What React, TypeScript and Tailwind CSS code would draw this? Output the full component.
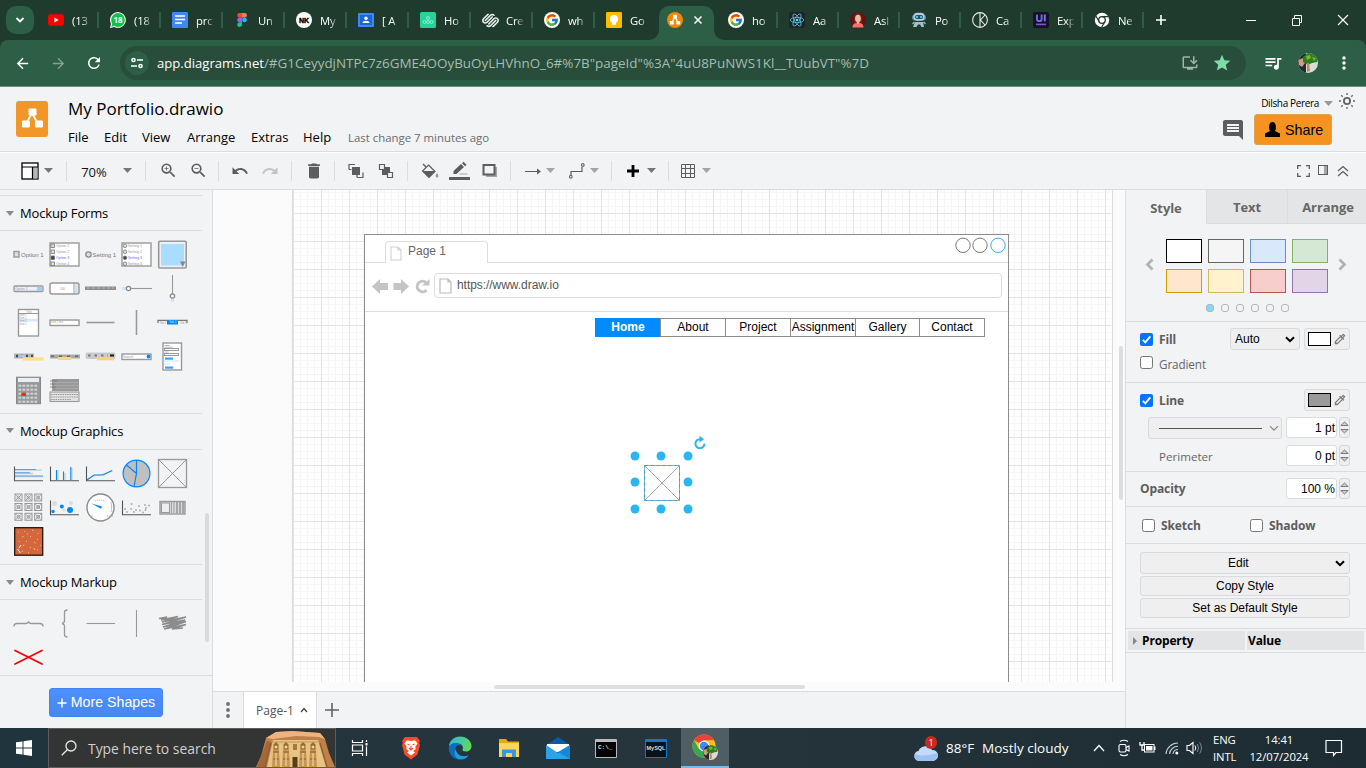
import React from "react";
import {
  MdArrowBack, MdArrowForward, MdRefresh, MdStar, MdQueueMusic, MdMoreVert, MdZoomIn, MdZoomOut,
  MdUndo, MdRedo, MdDelete, MdComment, MdOutlineColorize, MdInstallDesktop,
} from "react-icons/md";
import { FcGoogle } from "react-icons/fc";
import { SiSquarespace } from "react-icons/si";

type Kids = { children?: React.ReactNode };

const S = ({ w = 16, h = 16, vb, children, className = "" }: Kids & { w?: number; h?: number; vb?: string; className?: string }) => (
  <svg width={w} height={h} viewBox={vb ?? `0 0 ${w} ${h}`} fill="none" className={`block shrink-0 ${className}`}>
    {children}
  </svg>
);

/* ---------- browser chrome ---------- */

const YouTube = () => (<S><rect x="0" y="2.3" width="16" height="11.4" rx="2.6" fill="#f00" /><path d="M6.4 5.6v4.8L10.6 8z" fill="#fff" /></S>);
const WhatsApp = () => (
  <S><path d="M0 16l1-4.2A7.9 7.9 0 1 1 4.300 15z" fill="#fff" /><circle cx="8" cy="8" r="6.900" fill="#12c24d" /><path d="M1.300 14.700l1-3.500 3 2.600z" fill="#12c24d" />
    <text x="8" y="11" fontSize="8" fontWeight="700" fill="#fff" textAnchor="middle" fontFamily="Open Sans">18</text></S>
);
const Docs = () => (<S><rect width="16" height="16" rx="1" fill="#4285f4" /><path d="M3 4h10M3 7.500h10M3 11h7" stroke="#fff" strokeWidth="1.700" /></S>);
const Figma = () => (
  <S><path d="M5.500 1H8v4.600H5.500a2.300 2.300 0 0 1 0-4.600z" fill="#f24e1e" /><path d="M8 1h2.700a2.300 2.300 0 0 1 0 4.600H8z" fill="#ff7262" />
    <path d="M5.500 5.600H8v4.600H5.500a2.300 2.300 0 0 1 0-4.600z" fill="#a259ff" /><circle cx="10.500" cy="7.900" r="2.300" fill="#1abcfe" /><path d="M5.500 10.200H8v2.400a2.400 2.400 0 1 1-2.500-2.400z" fill="#0acf83" /></S>
);
const NK = () => (<S><circle cx="8" cy="8" r="8" fill="#fff" /><text x="8" y="10.600" fontSize="7" fontWeight="700" stroke="#000" strokeWidth=".4" fill="#000" textAnchor="middle" fontFamily="Liberation Sans">NK</text></S>);
const Classroom = () => (<S><rect y="1" width="16" height="14" rx="1" fill="#4285f4" /><rect x="2" y="3" width="12" height="10" fill="#1967d2" /><circle cx="8" cy="6.300" r="1.700" fill="#fff" /><path d="M4.500 11c0-3 7-3 7 0z" fill="#fff" /></S>);
const Green = () => (<S><rect width="16" height="16" rx="1.500" fill="#25d39a" /><g stroke="#a5efd5" strokeWidth=".8"><circle cx="8" cy="6" r="1.500" /><circle cx="4.500" cy="10" r="1.500" /><circle cx="8" cy="10" r="1.500" /><circle cx="11.500" cy="10" r="1.500" /></g></S>);
const Squares = () => <SiSquarespace size={17} className="-mx-[0.5px] shrink-0 text-[#e8eeea]" />;
const Keep = () => (<S><rect width="16" height="16" rx="1.300" fill="#fbbc04" /><circle cx="8" cy="7" r="4" fill="#fff" /><path d="M6 10h4v2.800H6z" fill="#fff" /></S>);
const DrawTab = () => (<S><circle cx="8" cy="8" r="8" fill="#f08705" /><path d="M8 5L4.800 10.500M8 5l3.200 5.500" stroke="#fff" strokeWidth="1.300" /><g fill="#fff"><rect x="6" y="2.800" width="4" height="3.700" rx=".6" /><rect x="2.800" y="8.900" width="4" height="3.700" rx=".6" /><rect x="9.200" y="8.900" width="4" height="3.700" rx=".6" /></g></S>);
const ReactTab = () => (<S><rect width="16" height="16" rx="1.500" fill="#20232a" /><g stroke="#61dafb" strokeWidth=".7"><ellipse cx="8" cy="8" rx="6.800" ry="2.600" /><ellipse cx="8" cy="8" rx="6.800" ry="2.600" transform="rotate(60 8 8)" /><ellipse cx="8" cy="8" rx="6.800" ry="2.600" transform="rotate(120 8 8)" /></g><circle cx="8" cy="8" r="1.300" fill="#61dafb" /></S>);
const Woman = () => (
  <S><circle cx="8" cy="8" r="7.800" fill="#6d0d10" /><path d="M4.500 12C3 7 4 1 8 1S13 7 11.500 12z" fill="#5a3024" /><ellipse cx="8" cy="6.500" rx="2.900" ry="3.800" fill="#f2b79c" /><path d="M2.500 15.500c0-4 3-4.500 5.500-4.500s5.500.5 5.500 4.500z" fill="#ff6f6f" /><path d="M6.800 9h2.400v2.200L8 12l-1.200-.8z" fill="#f2b79c" /></S>
);
const Robot = () => (
  <S><rect x="1" y="2.500" width="14" height="6" rx="3" fill="#5b8fa8" /><rect x="2.500" y=".8" width="11" height="8" rx="3.500" fill="#b6ccd8" /><rect x="4" y="3" width="8" height="4" rx="2" fill="#24506e" /><circle cx="6" cy="5" r="1" fill="#5fe3ff" /><circle cx="10" cy="5" r="1" fill="#5fe3ff" /><path d="M4 10h8l1 5h-2.500L9 12.500H7L5.500 15H2z" fill="#a9bccd" /><path d="M1.500 12l2-2M14.500 12l-2-2" stroke="#8bb" strokeWidth="1.500" /></S>
);
const CK = () => (<S><circle cx="8" cy="8" r="7.400" stroke="#e6ece8" strokeWidth="1.100" /><path d="M8 .7v14.600M13 3L8.500 8l4.500 5" stroke="#e6ece8" strokeWidth="1.100" /></S>);
const UI = () => (
  <S><rect width="16" height="16" rx="2" fill="#17121f" /><path d="M4 2.500v4.700c0 2.600 4.600 2.600 4.600 0V2.500" stroke="#6a6cf5" strokeWidth="1.900" /><path d="M11.800 2.500v6.800" stroke="#8b6df5" strokeWidth="1.900" /><path d="M3 12.400h10" stroke="#8a4fd6" strokeWidth="1.600" /></S>
);
const ChromeGray = () => (<S><circle cx="8" cy="8" r="7.200" fill="#fff" /><circle cx="8" cy="8" r="3.300" fill="#fff" stroke="#1f3b2d" strokeWidth="1.300" /><path d="M8 4.700h6.600M5.200 9.700L1.900 4M10.800 9.700L7.600 15.300" stroke="#1f3b2d" strokeWidth="1.200" /></S>);
const G = () => <FcGoogle size={16} className="shrink-0 rounded-full bg-white p-px" />;

const leftTabs: [React.ReactNode, string][] = [
  [<YouTube />, "(13"], [<WhatsApp />, "(18"], [<Docs />, "prc"], [<Figma />, "Un"], [<NK />, "My"], [<Classroom />, "[ A"],
  [<Green />, "Ho"], [<Squares />, "Cre"], [<G />, "wh"], [<Keep />, "Go"],
];
const rightTabs: [React.ReactNode, string][] = [
  [<G />, "ho"], [<ReactTab />, "Aa"], [<Woman />, "Asl"], [<Robot />, "Po"], [<CK />, "Ca"], [<UI />, "Exp"], [<ChromeGray />, "Ne"],
];

const Tab = ({ icon, label, wide, sep = true }: { icon: React.ReactNode; label: string; wide?: boolean; sep?: boolean }) => (
  <div className={`flex h-10 shrink-0 items-center ${wide ? "w-[62px]" : "w-[61px]"}`}>
    <div className="ml-[10px] flex w-4 shrink-0 justify-center">{icon}</div>
    <div className={`ml-2 mt-[2px] h-[18px] shrink-0 whitespace-nowrap text-[11.3px] leading-[17px] tracking-[-0.2px] text-white [mask-image:linear-gradient(to_right,#000_55%,transparent_105%)] ${wide ? "w-[18px]" : "w-[17px]"}`}>{label}</div>
    {sep && <div className="ml-auto mr-px h-4 w-[2px] bg-[#2c5f46]" />}
  </div>
);

const Avatar = ({ size }: { size: number }) => (
  <S w={size} h={size} vb="0 0 20 20">
    <defs><clipPath id={`av${size}`}><circle cx="10" cy="10" r="10" /></clipPath></defs>
    <g clipPath={`url(#av${size})`}>
      <rect width="20" height="20" fill="#d9ddd2" /><path d="M0 0h8v20H0z" fill="#1d2a38" /><path d="M0 7l5-2 2 5-3 4-3-2z" fill="#d09a7b" />
      <path d="M5 4l6-5 9 3-1 7-5 1-4 2-5-3z" fill="#2f7d1d" /><path d="M8 3l4-1 1 3-4 2zM14 4l4 1-2 3z" fill="#74b53b" /><path d="M9 10l2 0 1 8-3 1z" fill="#b98a62" />
    </g>
  </S>
);

function Browser() {
  return (
    <>
      <div className="flex h-10 shrink-0 items-center bg-[#1f3b2d]">
        <div className="ml-[6px] mr-1 flex h-7 w-7 shrink-0 items-center justify-center rounded-[10px] bg-[#2c5f46]">
          <S w={10} h={8}><path d="M1.500 2l3.500 3.500L8.500 2" stroke="#fff" strokeWidth="1.800" /></S>
        </div>
        {leftTabs.map(([i, l], k) => <Tab key={k} icon={i} label={l} wide sep={k < 9} />)}
        <div className="relative ml-px mr-1 flex h-[34px] w-[55px] shrink-0 items-center self-end rounded-t-[10px] bg-[#2c5f46]">
          <S w={10} h={10} className="absolute -left-[10px] bottom-0"><path d="M10 0v10H0A10 10 0 0 0 10 0z" fill="#2c5f46" /></S>
          <S w={10} h={10} className="absolute -right-[10px] bottom-0"><path d="M0 0v10h10A10 10 0 0 1 0 0z" fill="#2c5f46" /></S>
          <div className="-mt-[6px] ml-2"><DrawTab /></div>
          <S w={10} h={10} className="-mt-[6px] ml-[10px]"><path d="M1.500 1.500l7 7M8.500 1.500l-7 7" stroke="#eef3f0" strokeWidth="1.700" /></S>
        </div>
        {rightTabs.map(([i, l], k) => <Tab key={k} icon={i} label={l} />)}
        <S w={12} h={12} className="ml-[10px]"><path d="M6 1v10M1 6h10" stroke="#fff" strokeWidth="1.600" /></S>
        <S w={12} h={12} className="ml-[78px]"><path d="M1 6.500h10" stroke="#fff" /></S>
        <S w={12} h={12} className="ml-[34px]"><path d="M1.500 4.500h7v7h-7zM3.500 4.500v-3h7v7h-2" stroke="#fff" /></S>
        <S w={12} h={12} className="ml-[34px]"><path d="M1 1l10 10M11 1L1 11" stroke="#fff" strokeWidth="1.100" /></S>
      </div>
      <div className="h-[47px] shrink-0 bg-[#1f3b2d]">
        <div className="flex h-[47px] items-center rounded-t-[8px] border-b border-[#6b9480] bg-[#2c5f46]">
          <MdArrowBack size={17} className="ml-[14px] text-white" />
          <MdArrowForward size={17} className="ml-[19px] text-[#83a291]" />
          <MdRefresh size={18} className="ml-[18px] text-white" />
          <div className="ml-[17px] flex h-[34px] w-[1126px] items-center rounded-full bg-[#294d3b]">
            <div className="ml-[5px] flex h-6 w-6 items-center justify-center rounded-full bg-[#2c5f46]">
              <S w={12} h={12}><g stroke="#fff" strokeWidth="1.500"><circle cx="2.500" cy="3" r="1.600" /><path d="M6 3h6M0 9h6" /><circle cx="9.500" cy="9" r="1.600" /></g></S>
            </div>
            <div className="ml-2 w-[1024px] shrink-0 whitespace-nowrap text-[13.1px] leading-[18px] text-[#a5bdb0]">
              <span className="text-white">app.diagrams.net</span>
              <span className="text-[13.430px]">/#G1CeyydjNTPc7z6GME4OOyBuOyLHVhnO_6#%7B"pageId"%3A"4uU8PuNWS1Kl__TUubVT"%7D</span>
            </div>
            <MdInstallDesktop size={18} className="shrink-0 text-[#a3b3aa]" />
            <MdStar size={20} className="ml-[13px] shrink-0 text-[#81dba8]" />
          </div>
          <MdQueueMusic size={20} className="ml-[17px] shrink-0 text-white" />
          <div className="ml-[15px]"><Avatar size={20} /></div>
          <MdMoreVert size={20} className="ml-[16px] shrink-0 text-white" />
        </div>
      </div>
    </>
  );
}

/* ---------- app header ---------- */

const Caret = ({ c = "#777", className = "" }: { c?: string; className?: string }) => (
  <S w={9} h={5} className={className}><path d="M0 0h9L4.500 5z" fill={c} /></S>
);

function Header() {
  return (
    <div className="flex h-[65px] shrink-0 border-b border-[#dadce0] bg-[#f1f3f4]">
      <div className="ml-4 mt-[14px] h-9 w-8 rounded-[3px] bg-[#f2962a]">
        <S w={32} h={36}><path d="M16 12L10 23M16 12l6 11" stroke="#fff" strokeWidth="1.800" /><g fill="#fff"><rect x="12.500" y="7.500" width="8" height="7" rx="1.200" /><rect x="6" y="19.500" width="8" height="7" rx="1.200" /><rect x="19" y="19.500" width="8" height="7" rx="1.200" /></g></S>
      </div>
      <div className="ml-5 flex w-[500px] flex-col">
        <div className="mt-[10px] h-6 whitespace-nowrap text-[17px] leading-6 text-black">My Portfolio.drawio</div>
        <div className="mt-[6px] flex h-5 whitespace-nowrap text-[13px] leading-5 text-black">
          <span className="w-9">File</span><span className="w-[38px]">Edit</span><span className="w-[45px]">View</span>
          <span className="w-16">Arrange</span><span className="w-[52px]">Extras</span><span className="w-[45px]">Help</span>
          <span className="text-[11.4px] leading-[21px] text-[#6b6b6b]">Last change 7 minutes ago</span>
        </div>
      </div>
      <div className="ml-auto flex flex-col items-end">
        <div className="mr-[10px] mt-[6px] flex h-[18px] items-center">
          <span className="mt-px text-[10px] leading-[14px] tracking-[-0.35px] text-black">Dilsha Perera</span>
          <Caret c="#999" className="ml-[5px] mt-[2px]" />
          <S w={18} h={18} className="ml-[5px] -mt-[2px]"><g stroke="#5f6368" strokeWidth="1.300"><circle cx="9" cy="9" r="3.100" strokeWidth="1.800" /><path d="M9 1v2M9 15v2M1 9h2M15 9h2M3.300 3.300l1.400 1.400M13.300 13.300l1.400 1.400M3.300 14.700l1.400-1.400M13.300 4.700l1.400-1.400" /></g></S>
        </div>
        <div className="mr-[34px] mt-[3px] flex h-[31px] items-center">
          <MdComment size={24} className="mr-[9px] text-[#5c5d60]" />
          <div className="flex h-[31px] w-[78px] items-center rounded-[3px] border border-[#e0a050] bg-[#f4931f] pl-[10px]">
            <S w={15} h={16}><path d="M0 15v-3.500l5-2.500c-1.500-2-1.500-9 2.500-9s4 7 2.500 9l5 2.500V15z" fill="#000" /></S>
            <span className="ml-[5px] font-['Liberation_Sans',sans-serif] text-[14.300px] leading-5 text-black">Share</span>
          </div>
        </div>
      </div>
    </div>
  );
}

const Cell = ({ w, ml, children }: Kids & { w: string; ml: string }) => (
  <div className={`flex h-6 shrink-0 items-center justify-center text-[#5c5d60] ${w} ${ml}`}>{children}</div>
);
const Sep = ({ ml }: { ml: string }) => <div className={`h-5 w-px shrink-0 bg-[#dadce0] ${ml}`} />;

function Toolbar() {
  return (
    <div className="flex h-[38px] shrink-0 items-center border-b border-t border-[#dadce0] border-t-white bg-[#f1f3f4] pb-px">
      <Cell w="w-[26px]" ml="ml-[17px]"><S w={18} h={18}><rect x="1" y="1" width="16" height="16" fill="#fff" stroke="#000" strokeWidth="1.300" /><rect x="11.500" y="5" width="5" height="11.500" fill="#b5b5b5" /><path d="M1 5h16M11.500 5v12" stroke="#000" strokeWidth="1.200" /></S></Cell>
      <Cell w="w-[10px]" ml=""><Caret /></Cell>
      <Sep ml="ml-[13px]" />
      <Cell w="w-[38px]" ml="ml-[8px]"><span className="mt-[3px] text-[13px] leading-5 text-[#111]">70%</span></Cell>
      <Cell w="w-3" ml="ml-2"><Caret /></Cell>
      <Sep ml="ml-[12px]" />
      <Cell w="w-[26px]" ml="ml-[9px]"><MdZoomIn size={19} /></Cell>
      <Cell w="w-[26px]" ml="ml-1"><MdZoomOut size={19} /></Cell>
      <Sep ml="ml-[7px]" />
      <Cell w="w-[26px]" ml="ml-2"><MdUndo size={18} /></Cell>
      <Cell w="w-[26px]" ml="ml-1"><MdRedo size={18} className="text-[#c0c2c4]" /></Cell>
      <Sep ml="ml-2" />
      <Cell w="w-[26px]" ml="ml-[9px]"><MdDelete size={20} /></Cell>
      <Sep ml="ml-[7px]" />
      <Cell w="w-[26px]" ml="ml-2"><S><path d="M1 6.500V1.500h6M15 9.500v5H9" stroke="#5c5d60" strokeWidth="1.200" /><path d="M1 6.500h2.500M9 14.500v-3" stroke="#5c5d60" strokeWidth="1.200" /><rect x="4" y="4" width="8" height="8" fill="#5c5d60" /></S></Cell>
      <Cell w="w-[26px]" ml="ml-1"><S><rect x="4" y="4" width="8" height="8" fill="#5c5d60" /><path d="M1.500 1.500h5v5h-5zM9.500 9.500h5v5h-5z" fill="#f1f3f4" stroke="#5c5d60" strokeWidth="1.200" /></S></Cell>
      <Sep ml="ml-2" />
      <Cell w="w-[26px]" ml="ml-[9px]">
        <S w={18} h={16}><path d="M2 1l3 3" stroke="#5c5d60" strokeWidth="1.400" /><path d="M7.500 2L14 8.500 8 14.500 1.500 8z" stroke="#5c5d60" strokeWidth="1.200" /><path d="M1.500 8h12.500L8 14.500z" fill="#5c5d60" /><path d="M16 10c2.500 3 1.200 4.500 0 4.500S13.500 13 16 10z" fill="#9a9b9d" /></S>
      </Cell>
      <Cell w="w-6" ml="ml-1"><S w={21} h={20}><path d="M4.500 13V10L12 3l3 3-7.500 7zM13 2.200l1.500-1.400 3 3-1.500 1.400z" fill="#5c5d60" /><path d="M10.500 13h8" stroke="#b5b5b5" strokeWidth="1.200" /><rect y="16" width="21" height="3" fill="#5c5d60" /></S></Cell>
      <Cell w="w-[26px]" ml="ml-[6px]"><S w={16} h={15}><path d="M4 4h11v10H4z" fill="#a5a6a8" /><rect x="1.500" y="2" width="11" height="9.500" fill="#f1f3f4" stroke="#5c5d60" strokeWidth="2" /></S></Cell>
      <Sep ml="ml-[7px]" />
      <Cell w="w-[26px]" ml="ml-[9px]"><S w={16} h={8}><path d="M0 4.500h13" stroke="#5c5d60" /><path d="M12 1.500l4 3-4 3z" fill="#5c5d60" /></S></Cell>
      <Cell w="w-3" ml="-ml-[2px]"><Caret c="#a3a4a6" /></Cell>
      <Cell w="w-[26px]" ml="ml-2"><S><path d="M2 12V8.500h11V4" stroke="#5c5d60" strokeWidth="1.200" /><path d="M.6 12.600h2.400v2.400H.6zM12.600.8H15v2.400h-2.400z" fill="#f1f3f4" stroke="#5c5d60" /></S></Cell>
      <Cell w="w-3" ml="-ml-[2px]"><Caret c="#a3a4a6" /></Cell>
      <Sep ml="ml-[11px]" />
      <Cell w="w-[26px]" ml="ml-2"><S w={14} h={14}><path d="M7 1v12M1 7h12" stroke="#000" strokeWidth="2.800" /></S></Cell>
      <Cell w="w-3" ml="-ml-[1px]"><Caret /></Cell>
      <Sep ml="ml-[11px]" />
      <Cell w="w-[26px]" ml="ml-[6px]"><S w={14} h={14}><path d="M.5.500h13v13H.5zM4.500.500v13M9.500.500v13M.5 4.500h13M.5 9.500h13" stroke="#5c5d60" /></S></Cell>
      <Cell w="w-3" ml="-ml-px"><Caret c="#a3a4a6" /></Cell>
      <div className="ml-auto mr-[17px] flex items-center gap-2">
        <S w={13} h={12}><path d="M.7 4V.7H4M9 .7h3.300V4M.7 8v3.300H4M9 11.300h3.300V8" stroke="#5c5d60" strokeWidth="1.300" /></S>
        <S w={11} h={11}><rect x=".5" y=".5" width="9" height="9" stroke="#5c5d60" /><rect x="6" y="1" width="3" height="8" fill="#a3a4a6" /></S>
        <S w={12} h={12}><path d="M1 6l5-4.500L11 6M1 11l5-4.500 5 4.500" stroke="#5c5d60" strokeWidth="1.300" /></S>
      </div>
    </div>
  );
}

/* ---------- shape palette ---------- */

const L = "#999";
const Box = ({ x, y, w, h, f = "#fff", s = L, sw = 1.400 }: { x: number; y: number; w: number; h: number; f?: string; s?: string; sw?: number }) => (
  <rect x={x} y={y} width={w} height={h} fill={f} stroke={s} strokeWidth={sw} />
);
const Tiny = ({ x, y, c = "#999", size = 3, children }: Kids & { x: number; y: number; c?: string; size?: number }) => (
  <text x={x} y={y} fontSize={size} fill={c} fontFamily="Liberation Sans">{children}</text>
);
const rows4 = [7, 13, 19, 25];

const forms: React.ReactNode[] = [
  <><Box x={4} y={14.500} w={5} h={5.500} f="#ddd" /><Tiny x={11} y={19.500} size={6} c="#777">Option 1</Tiny></>,
  <><Box x={4} y={6} w={29} h={23} />{rows4.map((y, i) => <g key={y}><Box x={5} y={y} w={3.500} h={3.500} f={i === 2 ? "#444" : "#ddd"} s="#777" sw={.8} /><Tiny x={10} y={y + 3} size={3.500} c={i === 2 ? "#66f" : "#999"}>Option {i + 1}</Tiny></g>)}</>,
  <><circle cx="6.500" cy="17.500" r="2.700" fill="#ddd" stroke="#888" strokeWidth="1.200" /><Tiny x={10.500} y={19.500} size={6} c="#777">Setting 1</Tiny></>,
  <><Box x={4} y={6} w={29} h={23} />{rows4.map((y, i) => <g key={y}><circle cx="7" cy={y + 1.800} r="1.800" fill={i === 2 ? "#444" : "#ddd"} stroke="#777" strokeWidth=".8" /><Tiny x={10} y={y + 3} size={3.500} c={i === 2 ? "#66f" : "#999"}>Setting {i + 1}</Tiny></g>)}</>,
  <><rect x="4.700" y="4.200" width="27.500" height="26.800" rx="1" fill="#eef0f2" stroke={L} strokeWidth="1.600" /><rect x="7" y="7" width="23" height="21.500" fill="#a9ddff" /><path d="M26 24.500h5.500L28.700 30z" fill="#888" /></>,
  <><rect x="4" y="15" width="29" height="5.500" rx="1" fill="#eef" stroke={L} strokeWidth="1.300" /><rect x="27" y="15.700" width="5" height="4.200" fill="#9cd0f5" /><Tiny x={5} y={18.800} size={3.300}>Option 1</Tiny></>,
  <><rect x="4" y="12" width="29" height="11" rx="2" fill="#fff" stroke={L} strokeWidth="1.500" /><path d="M28 12v11" stroke={L} /><rect x="29" y="13" width="3" height="9" fill="#cbe6fa" /><Tiny x={14} y={18.500}>100</Tiny></>,
  <><rect x="3" y="15.500" width="31" height="3.500" fill="#8c8c8c" /><path d="M5 17h27" stroke="#ccc" strokeWidth=".8" strokeDasharray="3 2" /></>,
  <><path d="M4 17.500h30" stroke={L} strokeWidth="1.100" /><rect x="4" y="16" width="5" height="3" fill="#cfe4f5" /><circle cx="10.500" cy="17.500" r="2.200" fill="#f1f3f4" stroke="#888" strokeWidth="1.200" /></>,
  <><path d="M18.500 4v26" stroke={L} strokeWidth="1.100" /><rect x="17" y="27" width="3" height="4" fill="#cfe4f5" /><circle cx="18.500" cy="25" r="2.200" fill="#f1f3f4" stroke="#888" strokeWidth="1.200" /></>,
  <><Box x={8.500} y={4.500} w={20} h={26.500} /><path d="M9 8.500h19" stroke={L} /><rect x="9" y="14" width="19" height="2.500" fill="#d5e8fb" /><Tiny x={16} y={7.500}>Title</Tiny>{[11, 14, 17, 20].map((y) => <Tiny key={y} x={9.500} y={y} size={2.600}>Item 1</Tiny>)}</>,
  <><Box x={4} y={15} w={29} h={5.500} /><Tiny x={5} y={18} size={2.600}>Line 1 text</Tiny></>,
  <path d="M4.500 17.500h28" stroke={L} strokeWidth="1.600" />,
  <path d="M18.500 5v25" stroke={L} strokeWidth="1.600" />,
  <><path d="M4 18v-2.700h29V18" stroke="#777" strokeWidth="1.300" /><rect x="13" y="15" width="11" height="4.500" fill="#08f" /><Tiny x={15} y={18.300} c="#cfe6ff">Tab 2</Tiny><Tiny x={5.500} y={18.500} size={2.600}>Tab 1</Tiny><Tiny x={26} y={18.500} size={2.600}>Tab 3</Tiny></>,
  <><rect x="4" y="14.500" width="20" height="5" fill="#b5b5b5" /><path d="M6 17h17" stroke="#445" strokeWidth="2.500" strokeDasharray="2 3" /><path d="M10 17h5" stroke="#acf" strokeWidth="2" /><rect x="12.500" y="18.300" width="21" height="3.400" fill="#ffe08a" /></>,
  <><rect x="4" y="15.500" width="30" height="4" fill="#aaa" /><path d="M5 17.300h27" stroke="#667" strokeWidth="1.600" strokeDasharray="3 5" /><rect x="12" y="18" width="13" height="3" fill="#ffd48a" /></>,
  <><rect x="4" y="14" width="29" height="5.500" rx="1" fill="#ccc" stroke="#bbb" strokeWidth=".6" /><path d="M6 16.500h20" stroke="#778" strokeWidth="2" strokeDasharray="2.500 4" /><path d="M28 16.500h4" stroke="#222" strokeWidth="2.200" /><rect x="15" y="18.300" width="17" height="3" fill="#ffd07a" /></>,
  <><Box x={4} y={15} w={29} h={5.500} /><circle cx="30.500" cy="17.500" r="1.900" fill="#08f" /><Tiny x={5} y={18.800} size={3.300}>Search</Tiny></>,
  <><Box x={9} y={4} w={18.500} h={27} /><path d="M10.500 6.500h5M10.500 8.200h8M10.500 13h4" stroke="#9ab" strokeWidth=".8" /><Box x={10.500} y={9.500} w={14} h={2} sw={1} /><Box x={10.500} y={14.500} w={14} h={2} sw={1} /><rect x="11" y="18.500" width="8" height="2.200" fill="#3aa0ff" /><rect x="11" y="27.500" width="8" height="2.200" fill="#3aa0ff" /><path d="M10 22h15M10 25h6" stroke="#bdf" strokeWidth=".8" /></>,
  <><rect x="6.500" y="4.200" width="24" height="26.500" fill="#999" stroke="#888" /><rect x="8" y="5" width="21" height="4" fill="#e8eef5" />{[12, 16, 20, 24, 28].map((y) => [8, 12, 16, 20, 24].map((x) => <rect key={`${x}-${y}`} x={x + .4} y={y - .3} width="2.800" height="2" fill={x === 12 && y === 20 ? "#f22" : "#d0d4d8"} />))}<rect x="11.500" y="20" width="4.500" height="3" fill="#f22" /></>,
  <><path d="M6 6h27v12H6z" fill="#999" /><path d="M4 8h7M4 11h5M4 14h6" stroke="#777" strokeWidth=".8" /><path d="M7 9.500h25M8 12.500h25M10 15.500h22" stroke="#b5b5b5" strokeWidth=".6" /><Box x={4} y={19} w={29} h={9.500} f="#e2e2e2" sw={1.100} /><path d="M5 21.500h27M5 24h27M5 26.500h20" stroke="#999" strokeWidth="1" strokeDasharray="1.500 .8" /></>,
];

const Axis = () => <path d="M4.500 10.500v14.300H33" stroke="#555" strokeWidth="1.100" />;
const graphics: React.ReactNode[] = [
  <><path d="M5 14.200h27M5 17.500h18M5 20.500h28" stroke="#ccc" strokeWidth="1.300" /><path d="M5 13.500h21M5 16.700h15M5 20h28" stroke="#4ea6f5" strokeWidth="1" /><Axis /></>,
  <><path d="M12 14v10M19 17v7M26 12v12" stroke="#ccc" strokeWidth="1.200" /><path d="M10.500 14v10M17.500 15.500v8.500M24.800 11v13" stroke="#08f" strokeWidth="1.100" /><Axis /></>,
  <><path d="M5 23l7-3 9-2 10-3" stroke="#ccc" /><path d="M5 24l7-5h9l9-4.500" stroke="#08f" strokeWidth="1.100" /><Axis /></>,
  <><circle cx="18.500" cy="17.500" r="13.400" fill="#c0c0c0" stroke="#08f" strokeWidth="1.200" /><path d="M18.500 17.500V4M18.500 17.500L8.500 9M18.500 17.500l-2.500 13" stroke="#08f" strokeWidth="1.200" /></>,
  <><Box x={4.500} y={3.500} w={28} h={28} f="none" sw={1.300} /><path d="M4.500 3.500l28 28M32.500 3.500l-28 28" stroke={L} /></>,
  <>{[4.500, 14, 23.800].map((y) => [5, 15, 24.700].map((x) => <g key={`${x}-${y}`} stroke="#999"><rect x={x} y={y - .5} width="7" height="7" strokeWidth="1" /><path d={`M${x} ${y - .5}l7 7m0-7l-7 7`} strokeWidth=".8" /><circle cx={x + 3.500} cy={y + 3} r="1.500" /></g>))}</>,
  <><circle cx="8.500" cy="13.500" r="2.500" fill="#ddd" /><circle cx="25" cy="13" r="2" fill="#ddd" /><circle cx="15.800" cy="16.500" r="2" fill="#08f" /><circle cx="18" cy="20" r="1.600" fill="#ddd" /><circle cx="24" cy="20" r="3" fill="#08f" /><circle cx="7" cy="21.500" r="1.700" fill="#08f" /><Axis /></>,
  <><circle cx="18.500" cy="17.500" r="13.500" fill="#fff" stroke="#8c8c8c" strokeWidth="1.400" /><path d="M19 18.700L9.500 13.500l10.500 3z" fill="#08f" /><path d="M13 11c4-1.500 8-1 10 .5" stroke="#bbc" strokeWidth="1" strokeDasharray="1 1" /><path d="M29 12q1.500 5 0 10" stroke="#9cf" /><path d="M8 26h3M25 26h6" stroke="#b99" strokeDasharray="1 .7" /></>,
  <><g fill="#aaa">{[[7, 19], [9, 22], [13.500, 14], [13, 19], [18, 20], [21, 16], [22, 20.500], [28, 18], [27, 15], [31, 15.500], [27.500, 20], [16, 22], [25, 22.500]].map(([x, y]) => <circle key={`${x}${y}`} cx={x} cy={y} r=".9" />)}</g><Axis /></>,
  <><Box x={6} y={11.500} w={25} h={12.500} f="#ddd" s="#999" /><rect x="7.500" y="13" width="8" height="9.500" fill="#eee" stroke={L} /><path d="M17.500 12v11M20 12v11" stroke="#8ab" strokeWidth="1.100" /><path d="M23 12v11M26 12v11M29 12v11" stroke="#888" strokeWidth="1.300" /></>,
  <><rect x="4.700" y="3.700" width="28" height="27.500" fill="#d4683c" stroke="#22140c" strokeWidth="1.300" /><path d="M8 8l1 .5M14 7l.7.700M22 6l1.500.5M28 9l.5 1M12 13l1.500-.5M20 12l1 1M27 15l1 .5M9 17l.5 1M16 17l1 .5M24 18l1.500 1M30 22l.7-.7M13 22l1-1.500M20 23l1 1M27 26l1-.5M12 28l.5-1.500M18 29l1-.5M17 10h1M24 24l1 2" stroke="#f0cba4" strokeWidth=".8" /><path d="M7.500 25l3 4M9 24l2-3" stroke="#fff" strokeWidth=".9" /></>,
];

const markup: React.ReactNode[] = [
  <path d="M4 20.500c0-2.500 1-3 3-3h8.500c2 0 2.800-.5 3-2.300.2 1.800 1 2.300 3 2.300H30c2 0 3 .5 3 3" stroke={L} strokeWidth="1.300" />,
  <path d="M21.500 4c-2 0-3 .8-3 2.500v8c0 1.700-.5 2.700-2.500 3 2 .3 2.500 1.300 2.500 3v8c0 1.700 1 2.500 3 2.500" stroke={L} strokeWidth="1.300" />,
  <path d="M4.500 17.500h28.500" stroke={L} strokeWidth="1.100" />,
  <path d="M18.500 4v27" stroke={L} strokeWidth="1.100" />,
  <path d="M5 12.500l8-1.500-6 3 17-3.500-16 5.500 24-5-24 7.500 23-4.500-22 7 23-5.500-22 7.500 22-4.500-14 4.500 11-1" stroke="#8c8c8c" strokeWidth="1.500" />,
  <path d="M5 10.500l27 13.500M32 10.500L5 24" stroke="#f00" strokeWidth="1.700" strokeLinecap="round" />,
];

const Section = ({ title, items, top, gap }: { title: string; items: React.ReactNode[]; top: string; gap: string }) => (
  <div className="w-[202px] border-t border-[#dadce0]">
    <div className={`flex items-center border-b border-[#dadce0] pl-[6px] ${top}`}>
      <S w={8} h={5}><path d="M0 0h8L4 5z" fill="#8a8a8a" /></S>
      <span className="ml-[6px] whitespace-nowrap text-[13px] leading-5 tracking-[-0.15px] text-black">{title}</span>
    </div>
    <div className={`grid grid-cols-[repeat(5,36px)] content-start pl-[10px] ${gap}`}>
      {items.map((n, i) => <S key={i} w={36} h={34}>{n}</S>)}
    </div>
  </div>
);

function Sidebar() {
  return (
    <div className="relative flex w-[213px] shrink-0 flex-col border-r border-[#dadce0] bg-[#f1f3f4]">
      <div className="h-[5px]" />
      <Section title="Mockup Forms" items={forms} top="h-[35px]" gap="h-[182px] pt-[6px]" />
      <Section title="Mockup Graphics" items={graphics} top="h-[36px] pb-[2px]" gap="h-[114px] pt-[6px]" />
      <Section title="Mockup Markup" items={markup} top="h-[35px]" gap="h-[75px] pt-[6px]" />
      <div className="flex flex-1 items-start border-t border-[#dadce0] pl-[49px] pt-3">
        <div className="flex h-[29px] w-[114px] items-center justify-center rounded-[3px] border border-[#4285f0] bg-gradient-to-b from-[#4d90fe] to-[#4787ed] font-['Liberation_Sans',sans-serif] text-[14.200px] text-white">
          <S w={10} h={10} className="mr-1"><path d="M5 .5v9M.5 5h9" stroke="#fff" strokeWidth="1.500" /></S>More Shapes
        </div>
      </div>
      <div className="absolute left-[205px] top-[323px] h-[129px] w-[4px] rounded bg-[#d9dadb]" />
    </div>
  );
}

/* ---------- diagram canvas ---------- */

const arial = "font-['Liberation_Sans',sans-serif]";
const menu = ["Home", "About", "Project", "Assignment", "Gallery", "Contact"];

function Canvas() {
  return (
    <div className="flex min-w-0 flex-1 flex-col bg-[#fbfbfb]">
      <div className="relative h-[492px] overflow-hidden">
        <S w={821} h={492} className="absolute left-[79px] top-0">
          <defs>
            <pattern id="minor" x="1" y="2" width="7" height="7" patternUnits="userSpaceOnUse"><path d="M0 0h1v7H0zM0 0h7v1H0z" fill="#f5f5f5" /></pattern>
            <pattern id="major" x="1" y="23" width="28" height="28" patternUnits="userSpaceOnUse"><path d="M0 0h1v28H0zM0 0h28v1H0z" fill="#e3e3e3" /></pattern>
          </defs>
          <rect width="821" height="492" fill="#fff" />
          <rect x="1" width="818" height="492" fill="url(#minor)" /><rect x="1" width="818" height="492" fill="url(#major)" />
          <path d="M.5 0v492M820.500 0v492" stroke="#dcdcdc" />
        </S>
        <div className="absolute left-[151px] top-[44px] h-[460px] w-[645px] border border-[#8c8c8c] bg-white">
          <div className="relative h-[28px] border-b border-[#ddd]">
            <div className="absolute left-[20px] top-[6px] flex h-[22px] w-[103px] rounded-t-[4px] border border-b-0 border-[#ddd] bg-white">
              <S w={12} h={15} className="ml-[4px] mt-[4px]"><path d="M1 1h7l3 3v10H1zM8 1v3h3" stroke="#d0d0d0" strokeWidth="1.100" /></S>
              <span className={`ml-[6px] mt-px ${arial} text-[12px] leading-4 text-[#666]`}>Page 1</span>
            </div>
            <div className="absolute right-[2px] top-[2px] flex gap-[1.600px]">
              {["#777", "#777", "#3ba5f5"].map((c, i) => <S key={i} w={16} h={16}><circle cx="8" cy="8.300" r="7.200" stroke={c} fill="#fff" /></S>)}
            </div>
          </div>
          <div className="flex h-[49px] items-start border-b border-[#ddd] pt-[10px]">
            <S w={60} h={24} className="ml-[6px]"><g fill="#c4c4c4"><path d="M1 13.500l8-7.500v4h8v7H9v4zM38 13.500l-8-7.500v4h-7.500v7H30v4z" /></g><path d="M55.500 17a5.300 5.300 0 1 1-.5-7.500" stroke="#c4c4c4" strokeWidth="3" /><path d="M58.500 6v6.500H51z" fill="#c4c4c4" /></S>
            <div className="ml-[3px] flex h-[25px] w-[568px] items-center rounded-[4px] border border-[#ddd]">
              <S w={13} h={16} className="ml-1"><path d="M1 1h8l3 3v11H1zM9 1v3h3" stroke="#bbb" strokeWidth="1.200" /></S>
              <span className={`-mt-[2px] ml-[5px] ${arial} text-[12px] leading-4 tracking-[-0.05px] text-[#555]`}>https://www.draw.io</span>
            </div>
          </div>
          <div className={`ml-[230px] mt-[6px] grid h-[19px] w-[390px] grid-cols-[65px_65px_65px_65px_64px_66px] ${arial} text-[12px] leading-[17px] text-black`}>
            {menu.map((m, i) => (
              <div key={m} className={`flex h-[19px] min-w-0 justify-center border-y border-l ${i === 0 ? "border-[#008cff] bg-[#008cff] font-bold text-white" : "border-[#8c8c8c]"} ${i === 5 ? "border-r" : ""}`}>{m}</div>
            ))}
          </div>
        </div>
        <S w={90} h={90} className="absolute left-[411px] top-[240px]">
          <rect x="20.500" y="35.500" width="35" height="35" fill="#fff" stroke="#a5a5a5" /><path d="M20.500 35.500l35 35M55.500 35.500l-35 35" stroke="#aaa" />
          <rect x="20.500" y="35.500" width="35" height="35" stroke="#1ba9f0" strokeDasharray="3 3" />
          <g fill="#29b6f2">{[26, 52, 79].map((y) => [11, 37, 64].map((x) => (x === 37 && y === 52 ? null : <circle key={`${x}-${y}`} cx={x} cy={y} r="4.500" />)))}</g>
          <path d="M80.400 13.500a4.500 4.500 0 1 1-4.500-4.300" stroke="#29b6f2" strokeWidth="2" /><path d="M75.500 5.800l4.500 3.500-4.500 3.500z" fill="#29b6f2" />
        </S>
        <div className="absolute left-[906px] top-[156px] h-[154px] w-[4px] rounded bg-[#dedede]" />
      </div>
      <div className="h-[10px] border-b border-[#dadce0] pl-[281px] pt-[3px]"><div className="h-1 w-[311px] rounded bg-[#dfdfdf]" /></div>
      <div className="flex flex-1 items-center bg-[#f1f3f4]">
        <S w={30} h={20}><g fill="#707070"><circle cx="15" cy="4" r="1.900" /><circle cx="15" cy="10" r="1.900" /><circle cx="15" cy="16" r="1.900" /></g></S>
        <div className="flex h-full w-[74px] items-center border-x border-[#dadce0] bg-white pl-[12px] pt-px text-[12px] text-[#555]">
          Page-1<S w={8} h={6} className="ml-[6px] -mt-[2px]"><path d="M1 5l3-3.500L7 5" stroke="#444" strokeWidth="1.300" /></S>
        </div>
        <S w={16} h={16} className="ml-[7px]"><path d="M8 1v14M1 8h14" stroke="#5f6368" strokeWidth="1.600" /></S>
      </div>
    </div>
  );
}

/* ---------- format panel ---------- */

const Check = ({ on }: { on?: boolean }) => on
  ? <S w={13} h={13}><rect width="13" height="13" rx="2" fill="#0075ff" /><path d="M2.800 6.800l2.500 2.600 5-6" stroke="#fff" strokeWidth="1.900" /></S>
  : <S w={13} h={13}><rect x=".5" y=".5" width="12" height="12" rx="2" fill="#fff" stroke="#767676" /></S>;
const Chevron = ({ c = "#000" }: { c?: string }) => <S w={10} h={7}><path d="M1 1.200l4 4 4-4" stroke={c} strokeWidth={c === "#000" ? 2 : 1.200} /></S>;
const ColorBtn = ({ cls }: { cls: string }) => (
  <div className="flex h-[22px] w-[46px] items-center rounded-[3px] border border-[#d8dadd] bg-[#efefef] pl-[3px]">
    <div className={`h-[14px] w-[23px] border border-black ${cls}`} />
    <MdOutlineColorize size={14} className="ml-[2px] text-[#777]" />
  </div>
);
const Num = ({ v, h }: { v: string; h: string }) => (
  <div className={`flex gap-[2px] ${h}`}>
    <div className={`flex w-[51px] items-center justify-end rounded-[3px] border border-[#dadce0] bg-white pr-px ${arial} text-[12px] text-black`}>{v}</div>
    <div className="flex w-[11px] flex-col items-center justify-around rounded-[3px] border border-[#d5d6d8] bg-[#efefef] py-px">
      <S w={9} h={5}><path d="M.8 4.500h7.400L4.500 1z" fill="#ccc" stroke="#666" strokeWidth=".8" /></S>
      <S w={9} h={5}><path d="M.8.500h7.400L4.500 4z" fill="#ccc" stroke="#666" strokeWidth=".8" /></S>
    </div>
  </div>
);
const swatches = [
  "border-black bg-white", "border-[#666] bg-[#f5f5f5]", "border-[#6c8ebf] bg-[#dae8fc]", "border-[#82b366] bg-[#d5e8d4]",
  "border-[#d79b00] bg-[#ffe6cc]", "border-[#d6b656] bg-[#fff2cc]", "border-[#b85450] bg-[#f8cecc]", "border-[#9673a6] bg-[#e1d5e7]",
];
const lbl = "text-[12px] font-bold leading-4 tracking-[-0.1px] text-[#5c5d60]";
const btn = `flex items-center justify-center rounded-[3px] border border-[#d8dadd] bg-[#efefef] ${arial} text-[12px] text-black`;

function Format() {
  return (
    <div className="flex w-[241px] shrink-0 flex-col border-l border-[#dadce0] bg-[#f1f3f4]">
      <div className="flex h-[34px] text-[13px] font-bold tracking-[-0.1px] text-[#666]">
        <div className="flex w-[80px] items-center justify-center pt-[3px]">Style</div>
        <div className="flex w-[81px] items-center justify-center border-b border-l border-[#dadce0] bg-[#e4e5e6] pt-[2px]">Text</div>
        <div className="flex w-[79px] items-center justify-center border-b border-l border-[#dadce0] bg-[#e4e5e6] pl-[2px] pt-[2px]">Arrange</div>
      </div>
      <div className="h-[98px] border-b border-[#dadce0] pt-[15px]">
        <div className="flex items-center">
          <S w={9} h={13} className="-mt-1 ml-[19px] mr-[12px]"><path d="M7.500 1.500l-5 5 5 5" stroke="#b3b3b3" strokeWidth="2.800" /></S>
          <div className="grid grid-cols-4 gap-[6px]">{swatches.map((s) => <div key={s} className={`h-6 w-9 border ${s}`} />)}</div>
          <S w={9} h={13} className="-mt-1 ml-[10px]"><path d="M1.500 1.500l5 5-5 5" stroke="#b3b3b3" strokeWidth="2.800" /></S>
        </div>
        <div className="ml-[80px] mt-[11px] flex gap-[7px]">
          {[0, 1, 2, 3, 4, 5].map((i) => <div key={i} className={`h-2 w-2 rounded-[3px] border border-[#b5b5b5] ${i === 0 ? "bg-[#84d7ff]" : "bg-[#f1f3f4]"}`} />)}
        </div>
      </div>
      <div className="h-[61px] border-b border-[#dadce0] pl-[14px] pt-[6px]">
        <div className="flex h-[22px] items-center">
          <Check on /><span className={`ml-[6px] mt-[2px] w-[71px] ${lbl}`}>Fill</span>
          <div className={`flex h-[22px] w-[70px] items-center justify-between rounded-[3px] border border-[#d8dadd] bg-[#efefef] pl-[4px] pr-[4px] ${arial} text-[12px] text-black`}>Auto<Chevron /></div>
          <div className="ml-1"><ColorBtn cls="bg-white" /></div>
        </div>
        <div className="mt-[6px] flex h-[13px] items-center"><Check /><span className="ml-[6px] mt-[3px] text-[11.700px] leading-4 tracking-[-0.1px] text-[#666]">Gradient</span></div>
      </div>
      <div className="h-[89px] border-b border-[#dadce0] pl-[14px] pt-[6px]">
        <div className="flex h-[22px] items-center">
          <Check on /><span className={`ml-[6px] mt-[2px] w-[145px] ${lbl}`}>Line</span><ColorBtn cls="bg-[#999]" />
        </div>
        <div className="mt-[6px] flex">
          <div className="ml-2 flex h-[22px] w-[134px] items-center rounded-[3px] border border-[#d8dadd] bg-[#efefef] pl-[10px]">
            <div className="mr-[7px] h-px w-[103px] bg-[#555]" /><Chevron c="#888" />
          </div>
          <div className="ml-1"><Num v="1 pt" h="h-[21px]" /></div>
        </div>
        <div className="mt-[6px] flex">
          <span className="ml-[19px] mt-1 w-[127px] text-[11.600px] leading-4 text-[#666]">Perimeter</span><Num v="0 pt" h="h-[21px]" />
        </div>
      </div>
      <div className="flex h-[35px] border-b border-[#dadce0] pl-[14px] pt-[6px]"><span className={`mt-[3px] w-[146px] ${lbl}`}>Opacity</span><Num v="100 %" h="h-[21px]" /></div>
      <div className="flex h-[37px] items-center border-b border-[#dadce0] pl-[16px]">
        <Check /><span className={`ml-[6px] mt-px w-[89px] ${lbl}`}>Sketch</span><Check /><span className={`ml-[6px] mt-px ${lbl}`}>Shadow</span>
      </div>
      <div className="flex h-[85px] flex-col gap-[2px] border-b border-[#dadce0] pl-[14px] pt-2">
        <div className={`h-[22px] w-[210px] ${btn}`}><span className="ml-[87px] mr-auto">Edit</span><span className="mr-[4px]"><Chevron /></span></div>
        <div className={`h-[20px] w-[210px] ${btn}`}>Copy Style</div>
        <div className={`h-[20px] w-[210px] ${btn}`}>Set as Default Style</div>
      </div>
      <div className="flex h-[24px] gap-[2px] border-b border-[#dadce0] pl-[2px] pt-[2px] text-[12px] font-bold leading-[18px] tracking-[-0.15px] text-black">
        <div className="flex h-[19px] w-[117px] items-center bg-[#e3e4e5] pl-[5px] pt-px"><S w={4} h={8} className="mr-[5px]"><path d="M0 0l4 4-4 4z" fill="#888" /></S>Property</div>
        <div className="flex h-[19px] w-[117px] items-center bg-[#e3e4e5] pl-px pt-px">Value</div>
      </div>
    </div>
  );
}

/* ---------- taskbar ---------- */

const Temple = () => (
  <S w={79} h={38}>
    <path d="M0 38L5 27 10 9 20 3 36 2 50 3 64 4 69 10 73 24 79 38z" fill="#c08048" />
    <path d="M10 9L20 3 36 2 64 4 69 10 63 8 40 7 17 10z" fill="#eeb380" /><path d="M5 27l6-15 4 1-5 25H1z" fill="#a2683a" />
    <path d="M17 11h45l8 27H11z" fill="#e6c486" /><path d="M17 13h45" stroke="#c39553" strokeWidth="1.200" />
    {[20, 30, 47, 57].map((x) => <g key={x}><path d={`M${x - 4} 38l.5-9 .5-7 1.500-6h3l1.500 6 .5 7 .5 9z`} fill="#c7964f" /><path d={`M${x - 2.500} 15.500l2.500-2.500 2.500 2.500v5h-5z`} fill="#9b6c31" /><circle cx={x} cy="18" r="1.500" fill="#edd09b" /><path d={`M${x - 3} 23h6M${x - 3} 30h6`} stroke="#8b602b" strokeWidth="1" /><path d={`M${x} 24v13`} stroke="#ecd09a" strokeWidth="1.300" /></g>)}
    <path d="M36.500 28h5v10h-5z" fill="#5d3b17" /><path d="M37 15h4v6h-4z" fill="#a87838" /><path d="M15 14L9 38M64 14l7 24" stroke="#8b5d30" strokeWidth="1.200" />
  </S>
);

const ChromeIcon = () => (
  <S w={26} h={26}><circle cx="12" cy="12" r="11.500" fill="#fbc116" /><path d="M12 .5A11.500 11.500 0 0 1 22 6.300H12L7 9 2 6.300A11.500 11.500 0 0 1 12 .5z" fill="#ea4335" /><path d="M2 6.300A11.500 11.500 0 0 0 12 23.500L17 15l-5 2.700-5-2.700z" fill="#34a853" /><circle cx="12" cy="12" r="5.400" fill="#fff" /><circle cx="12" cy="12" r="4.300" fill="#4285f4" /></S>
);

function Taskbar() {
  return (
    <div className="flex h-10 shrink-0 items-center bg-gradient-to-r from-[#20343e] via-[#26353c] to-[#1d2c33] text-white">
      <S w={16} h={16} className="ml-4"><path d="M0 2.300L6.500 1.400v6.100H0zM7.500 1.200L16 0v7.500H7.500zM0 8.500h6.500v6.100L0 13.700zM7.500 8.500H16V16l-8.500-1.200z" fill="#fff" /></S>
      <div className="ml-4 flex h-10 w-[288px] items-center border border-[#5a5c5d] bg-[#333434] pl-[12px]">
        <S w={16} h={16}><circle cx="10" cy="6" r="5" stroke="#e8e8e8" strokeWidth="1.300" /><path d="M6.500 9.500L.8 15.300" stroke="#e8e8e8" strokeWidth="1.300" /></S>
        <span className="ml-[11px] mt-px w-[169px] whitespace-nowrap text-[13.900px] leading-5 text-[#d0d0d0]">Type here to search</span>
        <Temple />
      </div>
      <S w={18} h={18} className="ml-[15px]"><g stroke="#fff" strokeWidth="1.200"><path d="M1.500 1v2.500h10V1M1.500 17v-2.500h10V17M1.500 6h10v6h-10zM15.500 1v2M15.500 7.500V17" /></g><rect x="14.500" y="4" width="2" height="2.500" fill="#fff" /></S>
      <S w={20} h={24} className="ml-[32px]"><path d="M4 1h12l3 4-1 2 1 2-2.500 9.500L10 23.500 3.500 18.500 1 9l1-2-1-2z" fill="#fb4b22" /><path d="M10 5l4-.7 2.500 3.200-2.300 3.500.6 2L12 15l2 1.500-4 3-4-3L8 15l-2.800-2 .6-2L3.500 7.500 6 4.300z" fill="#fff" /><path d="M6.500 8l2 1M13.500 8l-2 1M10 10v4M8 12l2 2 2-2" stroke="#fb4b22" strokeWidth="1.100" /></S>
      <S w={24} h={24} className="ml-[27px]">
        <defs><linearGradient id="eg" x1="0" y1="0" x2="24" y2="8" gradientUnits="userSpaceOnUse"><stop stopColor="#2bb5e8" /><stop offset="1" stopColor="#61d957" /></linearGradient></defs>
        <path d="M1 11C1 5 6 .5 12 .5c7 0 11.500 5 11.500 9.500 0 3.500-2.500 5.500-5.500 5.500-2.500 0-4-1-3.500-2 1.500-3-1-6-5-6-4 0-7 1.500-8.500 3.500z" fill="url(#eg)" /><path d="M1 11c1-3 4.500-4.500 8-4 2 .3 4 1.500 4.500 3-4-2-6.500 1-6 4 .5 5 6 8 12.500 5.500C17 24 11 24.500 7 22.500 3 20.500.3 16 1 11z" fill="#0f6cbd" /><path d="M8 13c0 5 5 9 12.500 6.500-2 3.500-7 4.500-10.500 3.500C6.500 21 5.500 16 8 13z" fill="#1b9de2" />
      </S>
      <S w={22} h={20} className="ml-[26px]"><path d="M1 1h7l2 2.500h11V19H1z" fill="#e8a51c" /><path d="M1 5h20v14H1z" fill="#ffd45c" /><path d="M4 19v-7.500h14V19h-4v-4H8v4z" fill="#3a96dd" /></S>
      <S w={24} h={24} className="ml-[26px]"><path d="M0 9L12 1l12 8v14H0z" fill="#0c59a4" /><path d="M1 8h22v8H1z" fill="#fff" /><path d="M0 9l12 8 12-8v14H0z" fill="#29a3ea" /><path d="M12 16l12-7v14z" fill="#1687d3" /></S>
      <S w={22} h={19} className="ml-[25px]"><rect width="22" height="19" rx="1" fill="#b9bcbe" /><rect x="1" y="3" width="20" height="15" fill="#050505" /><text x="3" y="9.500" fontSize="6" fontWeight="700" fill="#ddd" fontFamily="Liberation Mono">C:\_</text></S>
      <S w={22} h={19} className="ml-[28px]"><rect width="22" height="19" rx="1" fill="#1476cf" /><rect x="1" y="3" width="20" height="15" fill="#06131d" /><text x="1.500" y="11" fontSize="5.500" fontWeight="700" fill="#ddd" fontFamily="Liberation Sans">MySQL</text></S>
      <div className="ml-[14px] flex h-10 w-12 items-center justify-center border-b-2 border-[#76b9ed] bg-[#4e5e64]">
        <div className="relative"><ChromeIcon /><div className="absolute bottom-0 right-0"><Avatar size={15} /></div></div>
      </div>
      <div className="relative ml-[184px] flex h-10 w-[33px] items-center">
        <S w={26} h={22} className="mt-2"><path d="M6 20a5 5 0 0 1-.5-9.900A7.500 7.500 0 0 1 19 9a5.500 5.500 0 0 1 1 11z" fill="#c3dbfa" /><path d="M6 20a5 5 0 0 1-4-7.500c5 4 15 1 22.500 0A5.500 5.500 0 0 1 20 20z" fill="#9cc2f2" /></S>
        <div className="absolute left-[12px] top-[8px] flex h-[13px] w-[12px] items-center justify-center rounded-full bg-[#c92a1e] text-[9px] leading-none">1</div>
      </div>
      <span className="w-9 whitespace-pre text-[13.500px]">88°F</span><span className="w-[111px] whitespace-nowrap text-[13.500px]">Mostly cloudy</span>
      <S w={12} h={8}><path d="M1 7l5-5.500L11 7" stroke="#fff" strokeWidth="1.300" /></S>
      <S w={14} h={18} className="ml-[12px]"><g stroke="#fff" strokeWidth="1.100"><rect x="2" y="5.500" width="7" height="7.500" rx="1.500" /><path d="M9 8.500L12 7v5l-3-1.500M3 2.500q4-2.500 8 0M3 15.500q4 2.500 8 0" /></g></S>
      <S w={17} h={14} className="ml-[8px]"><rect x="5.500" y="3.500" width="9.500" height="7.500" stroke="#fff" /><rect x="7" y="5" width="6.500" height="4.500" fill="#fff" /><rect x="15" y="5.500" width="1.500" height="3.500" fill="#fff" /><path d="M1 1v3h4V1M3 4v5h2.500" stroke="#fff" strokeWidth="1.300" /></S>
      <S w={14} h={14} className="ml-[9px]"><g stroke="#c8ced1" strokeWidth="1.100"><path d="M1 13A12 12 0 0 1 13 2M4.500 13A8.500 8.500 0 0 1 13 5.300M8 13A5 5 0 0 1 13 8.500" /></g><circle cx="11.800" cy="12" r="1.500" fill="#fff" /></S>
      <S w={17} h={14} className="ml-[7px]"><path d="M1 4.500h2.500L7 1.500v11L3.500 9.500H1z" stroke="#fff" strokeWidth="1.100" /><path d="M9 4.500q1.500 2.500 0 5" stroke="#fff" /><path d="M11.300 3q2.500 4 0 8M13.700 1.500q3.500 5.500 0 11" stroke="#7d898e" /></S>
      <div className="ml-[10px] w-[34px] text-[11.300px] leading-[17px] tracking-[-0.1px]"><div>ENG</div><div>INTL</div></div>
      <div className="ml-px w-[62px] whitespace-nowrap text-center text-[11.300px] leading-[17px] tracking-[-0.1px]"><div>14:41</div><div>12/07/2024</div></div>
      <S w={18} h={18} className="ml-[15px]"><path d="M1 1.500h15.500v12H11L8.500 16.500V13.500H1z" stroke="#fff" strokeWidth="1.200" /></S>
    </div>
  );
}

export default function App() {
  return (
    <div className="flex h-[768px] w-[1366px] flex-col overflow-hidden bg-[#f1f3f4] font-['Open_Sans',sans-serif]">
      <Browser />
      <Header />
      <Toolbar />
      <div className="flex h-[538px] shrink-0">
        <Sidebar />
        <Canvas />
        <Format />
      </div>
      <Taskbar />
    </div>
  );
}
